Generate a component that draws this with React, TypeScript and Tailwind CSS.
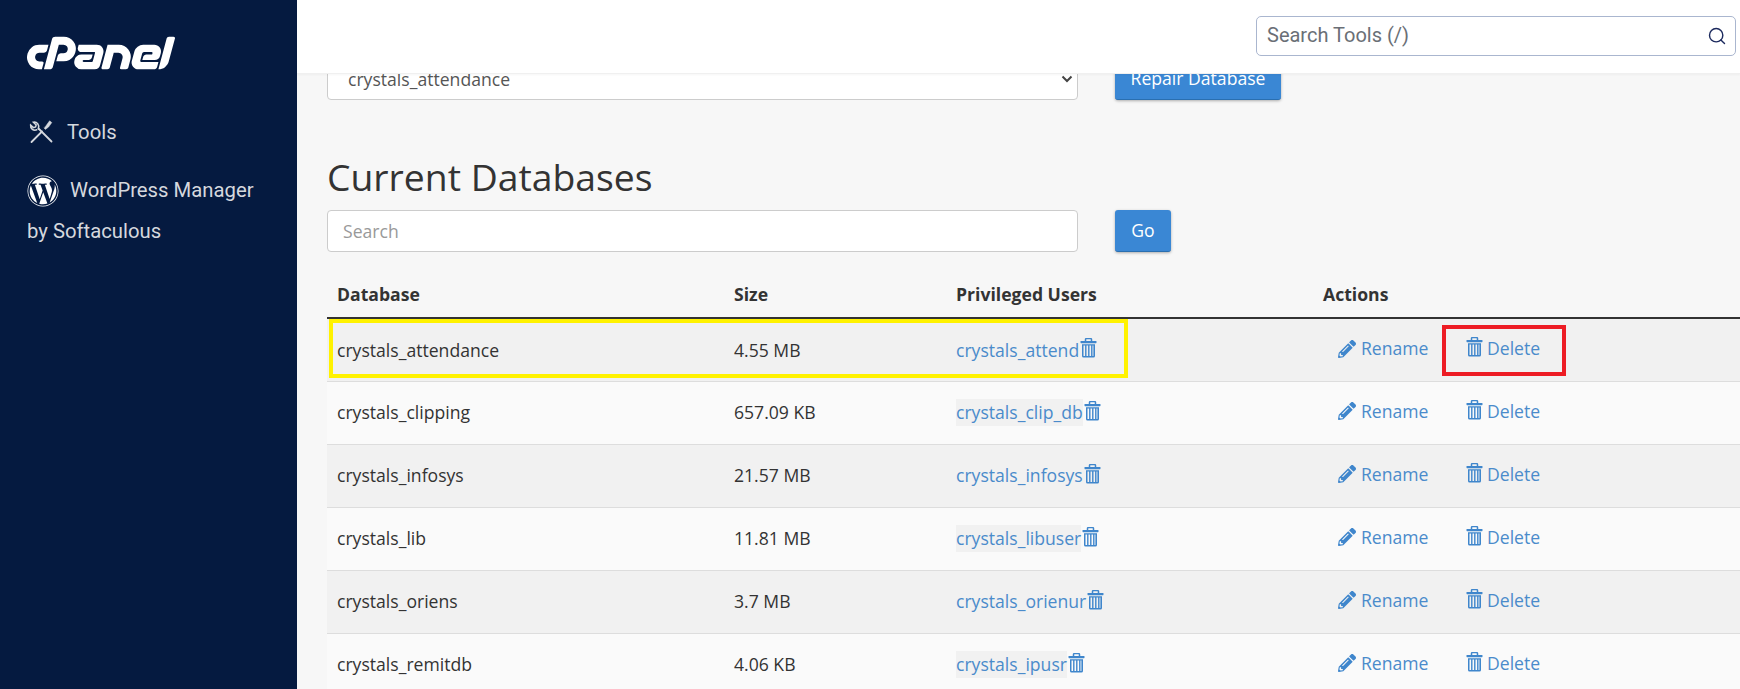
import { SiCpanel } from "react-icons/si";
import { FaWordpress, FaPencilAlt } from "react-icons/fa";
import { Search } from "lucide-react";

function Trash({ className }: { className?: string }) {
  return (
    <svg viewBox="0 0 17 20" className={className} fill="currentColor">
      <path d="M5.5 3V1.6A1 1 0 0 1 6.5.6h4a1 1 0 0 1 1 1V3" fill="none" stroke="currentColor" strokeWidth="1.5" />
      <rect x="0.5" y="3" width="16" height="2.2" rx="0.6" />
      <path d="M2 6.2h13V18a1.6 1.6 0 0 1-1.6 1.6H3.6A1.6 1.6 0 0 1 2 18zM3.5 7.4V18h1.6V7.4zm3 0V18h1.6V7.4zm3 0V18h1.6V7.4zm3 0V18h.9V7.4z" fillRule="evenodd" />
    </svg>
  );
}

function ToolsIcon() {
  return (
    <svg viewBox="0 0 24 24" className="h-[24px] w-[24px] shrink-0" fill="none" stroke="currentColor" strokeLinecap="round">
      <path d="M2.5 22 13 11.5" strokeWidth="1.8" />
      <path d="M17.4 5.2 20.6.8 22.8 2.6 19.6 7 16.4 9.4 15.2 8.2z" fill="currentColor" strokeWidth="0.5" strokeLinejoin="round" />
      <path d="M22.5 21.5 9.5 8.5" strokeWidth="1.8" />
      <path d="M9.4 8.4C10.6 5 8 1.6 4.4 2.2L7.2 5 6.6 7 4.4 7.6 1.6 5C1.2 8.8 4.6 11 7.8 9.8" strokeWidth="1.5" />
    </svg>
  );
}

const rows = [
  ["crystals_attendance", "4.55 MB", "crystals_attend", false],
  ["crystals_clipping", "657.09 KB", "crystals_clip_db", true],
  ["crystals_infosys", "21.57 MB", "crystals_infosys", true],
  ["crystals_lib", "11.81 MB", "crystals_libuser", true],
  ["crystals_oriens", "3.7 MB", "crystals_orienur", true],
  ["crystals_remitdb", "4.06 KB", "crystals_ipusr", true],
] as const;

export default function App() {
  return (
    <div className="flex h-[689px] w-[1740px] overflow-hidden bg-[#f7f7f7] font-['Open_Sans',sans-serif] text-[#333]">
      <aside className="w-[297px] shrink-0 bg-[#051a40] pl-[27px] font-['Roboto',sans-serif] text-[20.3px] text-[#d5d8de]">
        <div className="flex h-[106px] items-center text-white">
          <SiCpanel className="h-[148px] w-[148px] shrink-0" />
        </div>
        <div className="flex h-[54px] items-center gap-[14px] pb-[2px] pl-[2px]">
          <ToolsIcon />
          <span>Tools</span>
        </div>
        <div className="mt-[10px] leading-[41px]">
          <div className="flex items-center gap-[11px]">
            <FaWordpress className="h-[32px] w-[32px] shrink-0 text-white" />
            <span>WordPress Manager</span>
          </div>
          <div>by Softaculous</div>
        </div>
      </aside>

      <main className="flex min-w-0 flex-1 flex-col">
        <header className="relative z-10 flex h-[74px] shrink-0 items-start justify-end border-b border-[#f0f0f0] bg-white pr-[4px] pt-[16px] shadow-[0_1px_2px_rgba(0,0,0,0.04)]">
          <div className="flex h-[40px] w-[480px] items-center justify-between rounded-[5px] border border-[#aab6cf] bg-white pl-[10px] pr-[8px] font-['Roboto',sans-serif] text-[20px] text-[#6a6f76]">
            <span className="-mt-[2px]">Search Tools (/)</span>
            <Search size={20} strokeWidth={1.7} className="text-[#1c2a5e]" />
          </div>
        </header>

        <div className="-mt-[16px] pl-[30px]">
          <div className="flex items-start">
            <div className="flex h-[42px] w-[751px] items-center justify-between rounded-[4px] border border-[#ccc] bg-white pl-[20px] pr-[4px] text-[17.6px] text-[#555]">
              <span>crystals_attendance</span>
              <svg viewBox="0 0 12 8" className="h-[8px] w-[12px] text-[#444]" fill="none" stroke="currentColor" strokeWidth="2"><path d="M1.5 1.5 6 6l4.5-4.5" /></svg>
            </div>
            <button className="ml-[37px] h-[42px] w-[166px] rounded-[3px] border-b border-[#2a6fb0] bg-[#3a87d4] text-[17.6px] text-white shadow-[0_1px_3px_rgba(0,0,0,0.3)]">
              Repair Database
            </button>
          </div>

          <h2 className="mt-[52px] text-[37.3px] font-normal leading-[50px] text-[#333]">Current Databases</h2>

          <div className="mt-[8px] flex items-start">
            <div className="flex h-[42px] w-[751px] items-center rounded-[4px] border border-[#ccc] bg-white pl-[15px] text-[17.6px] text-[#999]">Search</div>
            <button className="ml-[37px] h-[42px] w-[56px] rounded-[3px] border-b border-[#2a6fb0] bg-[#3a87d4] text-[17.6px] text-white shadow-[0_1px_3px_rgba(0,0,0,0.3)]">
              Go
            </button>
          </div>

          <table className="mt-[10px] w-[1413px] table-fixed border-collapse text-[17.6px]">
            <colgroup>
              <col className="w-[397px]" />
              <col className="w-[222px]" />
              <col className="w-[367px]" />
              <col />
            </colgroup>
            <thead>
              <tr className="h-[56px] border-b-2 border-[#333] text-left">
                <th className="pl-[10px] pt-[9px] font-bold">Database</th>
                <th className="pl-[10px] pt-[9px] font-bold">Size</th>
                <th className="pl-[10px] pt-[9px] font-bold">Privileged Users</th>
                <th className="pl-[10px] pt-[9px] font-bold">Actions</th>
              </tr>
            </thead>
            <tbody>
              {rows.map(([db, size, user, shaded], i) => (
                <tr key={db} className={`h-[63px] border-b border-[#ddd] ${i % 2 === 0 ? "bg-[#f1f1f1]" : "bg-[#fafafa]"}`}>
                  <td className="pl-[10px]">{db}</td>
                  <td className="pl-[10px]">{size}</td>
                  <td className="pl-[10px] text-[#4a8bcb]">
                    <span className="inline-flex h-[24px] items-center">
                      <span className={shaded ? "bg-[#f1f1f1]" : ""}>{user}</span>
                      <Trash className="ml-[1px] -mt-[3px] h-[20px] w-[17px] text-[#3f86cc]" />
                    </span>
                  </td>
                  <td className="pl-[25px] text-[#4a8bcb]">
                    <span className="inline-flex items-center">
                      <FaPencilAlt className="h-[18px] w-[18px] text-[#3f86cc]" />
                      <span className="ml-[5px] w-[105px]">Rename</span>
                      <Trash className="-mt-[3px] h-[20px] w-[17px] text-[#3f86cc]" />
                      <span className="ml-[4px]">Delete</span>
                    </span>
                  </td>
                </tr>
              ))}
            </tbody>
          </table>
        </div>
      </main>

      <div className="absolute left-[329px] top-[319px] h-[59px] w-[799px] border-4 border-[#fff200]" />
      <div className="absolute left-[1442px] top-[325px] h-[51px] w-[124px] border-4 border-[#ed1c24]" />
    </div>
  );
}
